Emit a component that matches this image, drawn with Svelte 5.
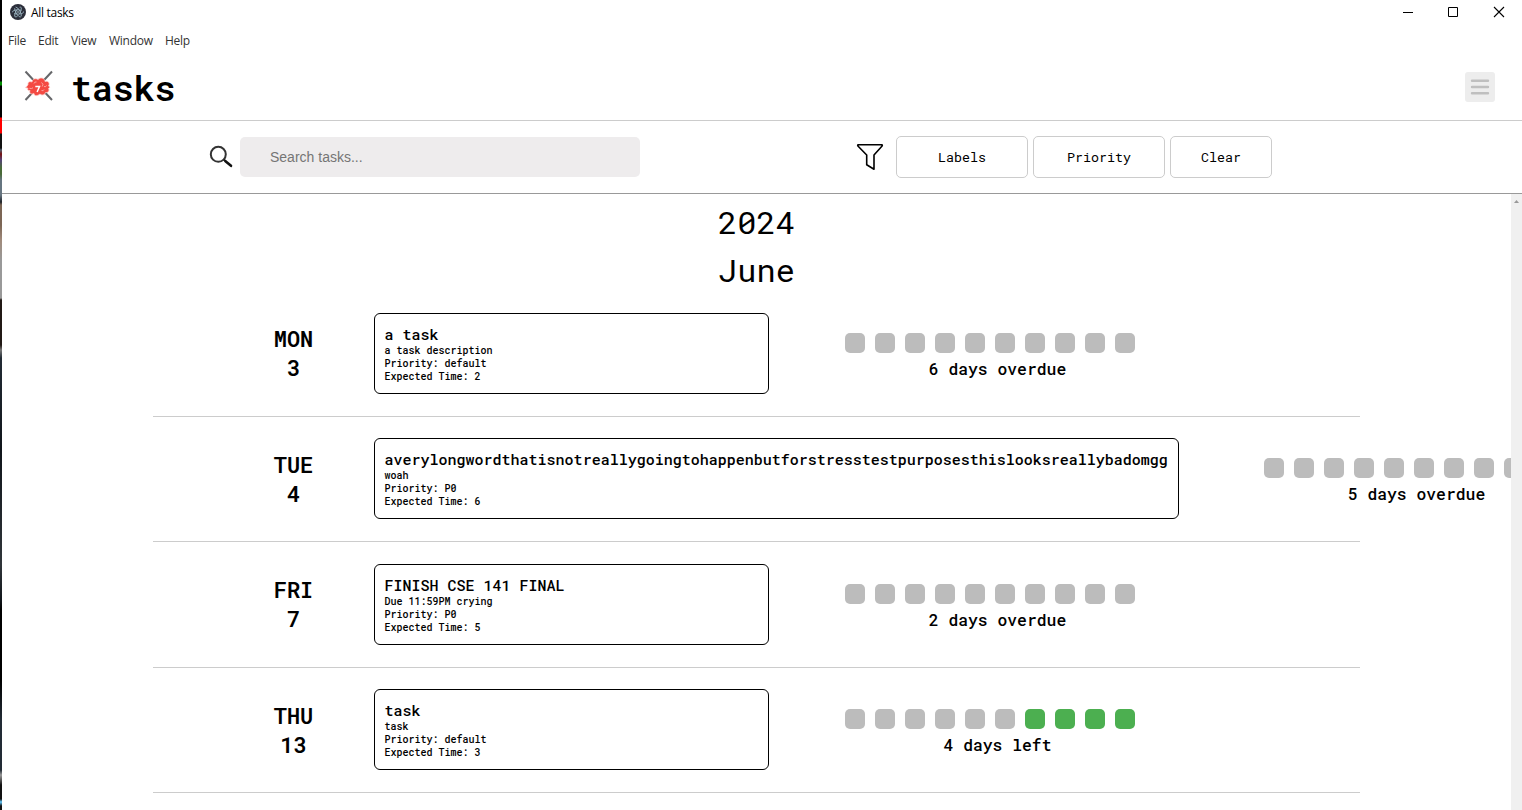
<script>
  const tasks = [
    { day: 'MON', date: 3, title: 'a task', text: 'a task description', priority: 'default', time: 2, left: 0, status: '6 days overdue' },
    { day: 'TUE', date: 4, title: 'averylongwordthatisnotreallygoingtohappenbutforstresstestpurposesthislooksreallybadomgg', text: 'woah', priority: 'P0', time: 6, left: 0, status: '5 days overdue', wide: true },
    { day: 'FRI', date: 7, title: 'FINISH CSE 141 FINAL', text: 'Due 11:59PM crying', priority: 'P0', time: 5, left: 0, status: '2 days overdue' },
    { day: 'THU', date: 13, title: 'task', text: 'task', priority: 'default', time: 3, left: 4, status: '4 days left' }
  ];
  const dots = Array.from({ length: 10 }, (_, i) => i);
</script>

<div class="screen">
  <div class="edge"></div>
  <div class="window">
    <div class="titlebar">
      <svg class="app" width="16" height="16" viewBox="0 0 16 16">
        <circle cx="8" cy="8" r="8" fill="#2b2e3a" />
        <g fill="none" stroke="#9fb9c6" stroke-width=".8">
          <ellipse cx="8" cy="8" rx="5.6" ry="2.1" transform="rotate(0 8 8)" stroke-dasharray="10 2" />
          <ellipse cx="8" cy="8" rx="5.6" ry="2.1" transform="rotate(60 8 8)" stroke-dasharray="11 2" />
          <ellipse cx="8" cy="8" rx="5.6" ry="2.1" transform="rotate(120 8 8)" stroke-dasharray="9 2" />
        </g>
        <circle cx="8" cy="8" r=".8" fill="#b8d4df" />
      </svg>
      <span class="name">All tasks</span>
      <svg class="controls" width="102" height="12" viewBox="0 0 102 12" fill="none" stroke="#000">
        <path d="M0 6.5h10M45.5 1.5h9v9h-9z" />
        <path d="M91 1l10 10M101 1L91 11" stroke-width="1.1" />
      </svg>
    </div>
    <nav class="menu">
      <span style:width="30px">File</span><span style:width="33px">Edit</span><span style:width="38px">View</span><span style:width="56px">Window</span><span>Help</span>
    </nav>
    <header>
      <svg class="logo" width="30" height="32" viewBox="0 0 30 32">
        <path d="M1.500 1.500L28 30M28 1.500L1.500 30" stroke="#66676a" stroke-width="2" />
        <path d="M1.300 17.500C3 17 2.500 16 4 15C3.500 12 5.500 11 8 12C8.500 8.500 12 8 14 9.500C17 6.500 21 8.500 21 11.500C25 10.500 26 14 24.500 16C26.500 17 25.500 18 24.500 18.500C26 20.500 24 23 21.500 22.500C20.500 25.500 17.500 25.500 16 24C13 26.500 10 26 10 23.500C7 25 5 23 6 20.500C4 21 3 19.500 4 18.300Z" fill="#f44a43" stroke="#fbcfcc" stroke-width=".8" />
        <path d="M11.300 16.600h4.200l-2.400 5.400" fill="none" stroke="#fff" stroke-width="1.500" />
        <path d="M5.500 18.300q2 .8 3.500-.5M10 13.500q.5-2 2.500-1.500M17.500 12.500q2.500 1.500.8 4M20 16.500q2 .8 2.500-1M17.500 20.500q2 .8 2.500-1" fill="none" stroke="#fbb7b3" stroke-width=".8" />
      </svg>
      <h1>tasks</h1>
      <button class="burger" aria-label="Menu">
        <svg width="20" height="18" viewBox="0 0 20 18" stroke="#bfbfbf" stroke-width="2.400" stroke-linecap="round"><path d="M2 2.700h16M2 9h16M2 15.300h16" /></svg>
      </button>
    </header>
    <div class="filters">
      <svg class="glass" width="26" height="24" viewBox="0 0 26 24" fill="none">
        <circle cx="10.300" cy="9.300" r="7.500" stroke="#333" stroke-width="2" />
        <path d="M15.700 14.500l2 1.800" stroke="#222" stroke-width="2" />
        <path d="M17.500 16.200l5.500 4.600" stroke="#111" stroke-width="2.600" stroke-linecap="round" />
      </svg>
      <input placeholder="Search tasks..." />
      <svg class="funnel" width="28" height="28" viewBox="0 0 28 28" fill="none" stroke="#000" stroke-width="1.600" stroke-linejoin="round">
        <path d="M2.200 1.800h23.600q.8.200.3 1.200L18 12v14.300l-7.300-4.600V12L1.900 3q-.5-1 .3-1.200z" />
      </svg>
      <button>Labels</button>
      <button>Priority</button>
      <button class="clear">Clear</button>
    </div>
    <div class="body">
      <main>
        <div class="heading">2024</div>
        <div class="heading">June</div>
        <div class="list">
          {#each tasks as t}
            <section>
              <div class="day"><div>{t.day}</div><div>{t.date}</div></div>
              <article class:wide={t.wide}>
                <h2>{t.title}</h2>
                <p>{t.text}</p>
                <p>Priority: {t.priority}</p>
                <p>Expected Time: {t.time}</p>
              </article>
              <div class="progress">
                <div class="dots">
                  {#each dots as i}<i class:on={i >= 10 - t.left}></i>{/each}
                </div>
                <div class="status">{t.status}</div>
              </div>
            </section>
          {/each}
        </div>
      </main>
      <div class="scroll"><svg width="5" height="3" viewBox="0 0 5 3"><path d="M0 3L2.500 0L5 3z" fill="#999" /></svg></div>
    </div>
  </div>
</div>

<style>
  :global(body) { margin: 0; overflow: hidden; }
  * { box-sizing: border-box; }
  .screen { display: flex; width: 1522px; height: 810px; overflow: hidden; background: #fff; color: #000; font-family: "Roboto Mono", "DejaVu Sans Mono", monospace; }
  .edge { width: 2px; flex: none; background: linear-gradient(#000 0 81px, #008c00 82px 85px, #000 86px 117px, #f00 118px 133px, #111 134px 148px, #526070 150px, #711 154px, #547 160px, #496b38 168px 174px, #667580 180px 195px, #20242b 202px, #7c6655 205px 225px, #a08a7b 240px, #999 260px 298px, #211915 300px 345px, #777 350px, #222b34 358px, #10151b 450px, #30353a 565px, #11161b 600px, #000 610px 680px, #222b35 720px 770px, #999 775px, #111 785px 799px, #6cf 802px, #111 806px); }
  .window { flex: 1; min-width: 0; display: flex; flex-direction: column; }
  .titlebar { height: 26px; flex: none; display: flex; align-items: center; padding: 0 17px 2px 8px; font: 12px "Open Sans", sans-serif; letter-spacing: -.3px; }
  .name { margin-left: 5px; padding-top: 1px; }
  .controls { margin-left: auto; }
  .menu { height: 30px; flex: none; display: flex; align-items: center; padding: 0 0 2px 6px; font: 12px "Open Sans", sans-serif; letter-spacing: -.25px; color: #333; }
  .menu span { flex: none; white-space: nowrap; }
  header { height: 65px; flex: none; display: flex; align-items: center; border-bottom: 1px solid #ccc; padding: 0 27px 0 22px; }
  .logo { margin-top: -4px; }
  h1 { margin: -2px 0 0 17px; font-size: 35px; line-height: 40px; font-weight: 600; letter-spacing: -.1px; }
  button { padding: 0; font-family: inherit; font-size: 13.333px; background: #fff; color: #000; border: 1px solid #ccc; border-radius: 5px; width: 132px; height: 42px; margin-right: 5px; flex: none; }
  .burger { width: 30px; height: 30px; border: 0; border-radius: 3px; background: #ededed; margin: -2px 0 0 auto; display: flex; align-items: center; justify-content: center; }
  .filters { height: 73px; flex: none; display: flex; align-items: center; border-bottom: 1px solid #999; padding-left: 206px; }
  input { width: 400px; height: 40px; margin-left: 6px; border: 0; border-radius: 5px; background: #eeeced; padding: 0 30px; font: 14px "Liberation Sans", Arial, sans-serif; }
  input::placeholder { color: #757575; }
  .funnel { margin: 0 12px 0 216px; }
  .clear { width: 102px; }
  .body { flex: 1; min-height: 0; display: flex; }
  main { flex: 1; min-width: 0; overflow: hidden; padding-top: 4px; }
  .heading { height: 48px; line-height: 48px; font-size: 32px; text-align: center; }
  .list { margin: -2.400px 0 0 151px; width: 1207px; }
  section { display: flex; height: 125.400px; border-bottom: 1px solid #ccc; padding-top: 21.400px; }
  .day { width: 83px; flex: none; margin: 11.400px 39px 0 99px; text-align: center; font-size: 22px; line-height: 29px; font-weight: 600; }
  article { width: 395px; height: 81px; flex: none; margin-right: 76px; border: 1px solid #000; border-radius: 6px; padding: 10px 9.600px 0; font-weight: 500; }
  article.wide { width: 805px; margin-right: 85px; }
  h2 { margin: 0; font-size: 15px; line-height: 20px; font-weight: inherit; white-space: nowrap; }
  p { margin: 0; font-size: 10px; line-height: 13px; white-space: nowrap; }
  .progress { width: 305px; flex: none; padding-top: 20px; }
  .dots { display: flex; gap: 10px; }
  i { width: 20px; height: 20px; flex: none; border-radius: 5px; background: #bcbcbc; }
  i.on { background: #4caf50; }
  .status { margin-top: 5px; line-height: 21px; font-size: 16.380px; font-weight: 500; text-align: center; }
  .scroll { width: 11px; flex: none; background: #f0f0f0; display: flex; justify-content: center; padding-top: 6px; }
</style>
